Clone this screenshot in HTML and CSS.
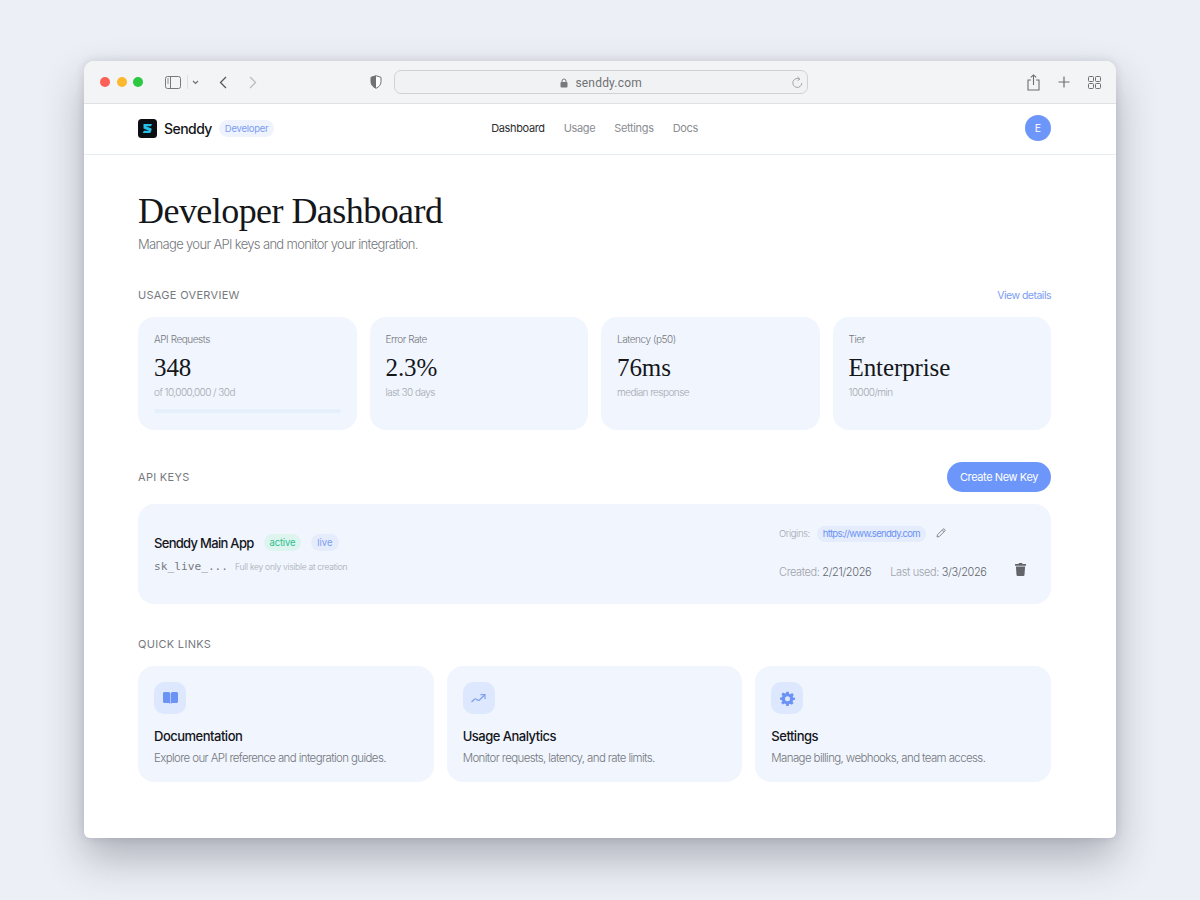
FILE: index.html
```html
<!DOCTYPE html>
<html lang="en">
  <head>
    <meta charset="UTF-8" />
    <meta name="viewport" content="width=device-width, initial-scale=1.0" />
    <title>Senddy Developer Dashboard</title>
    <link rel="stylesheet" href="styles.css">
  </head>
  <body>
    <div class="window">
      <div class="toolbar">
        <div class="traffic">
          <span class="dot red"></span>
          <span class="dot yellow"></span>
          <span class="dot green"></span>
        </div>
        <svg class="tool-sidebar" width="16" height="13" viewBox="0 0 16 13" fill="none" stroke="#77797d" stroke-width="1">
          <rect x="0.5" y="0.5" width="15" height="12" rx="2"/>
          <path d="M5.5 0.5v12"/>
          <path d="M2 3h2M2 5h2M2 7h2" stroke-width="0.8"/>
        </svg>
        <span class="tool-sep"></span>
        <svg class="tool-caret" width="7" height="5" viewBox="0 0 7 5" fill="none" stroke="#6c6e72" stroke-width="1.1">
          <path d="M1 1l2.5 2.5L6 1"/>
        </svg>
        <svg class="tool-back" width="8" height="13" viewBox="0 0 8 13" fill="none" stroke="#55575b" stroke-width="1.3">
          <path d="M7 1L1.5 6.5 7 12"/>
        </svg>
        <svg class="tool-forward" width="8" height="13" viewBox="0 0 8 13" fill="none" stroke="#b9bbbf" stroke-width="1.3">
          <path d="M1 1l5.5 5.5L1 12"/>
        </svg>
        <svg class="tool-shield" width="12" height="14" viewBox="0 0 12 14">
          <path d="M6 0.7l5 1.6v4.5c0 3-2.2 5.3-5 6.5-2.8-1.2-5-3.500-5-6.500V2.300z" fill="#fff" stroke="#6f7175" stroke-width="1"/>
          <path d="M6 0.7v12.600c-2.800-1.200-5-3.500-5-6.500V2.300z" fill="#6f7175"/>
        </svg>
        <div class="address">
          <svg class="lock" width="8" height="10" viewBox="0 0 8 10">
            <rect x="0.500" y="4" width="7" height="5.500" rx="1" fill="#77797d"/>
            <path d="M2 4.500V3a2 2 0 0 1 4 0v1.500" fill="none" stroke="#77797d" stroke-width="1"/>
          </svg>
          <span>senddy.com</span>
          <svg class="reload" width="12" height="13" viewBox="0 0 12 13" fill="none" stroke="#a4a6aa" stroke-width="1">
            <path d="M8.800 3.200a4.500 4.500 0 1 0 2 3.800"/>
            <path d="M6.500 0.800l2.400 2.300-2.400 1.600"/>
          </svg>
        </div>
        <svg class="tool-share" width="13" height="17" viewBox="0 0 13 17" fill="none" stroke="#6c6e72" stroke-width="1.100">
          <path d="M4 6H1v10h11V6H9"/>
          <path d="M6.500 11V1M3.800 3.400L6.500 0.900l2.700 2.500"/>
        </svg>
        <svg class="tool-plus" width="12" height="12" viewBox="0 0 12 12" stroke="#6c6e72" stroke-width="1.200">
          <path d="M6 0.500v11M0.500 6h11"/>
        </svg>
        <svg class="tool-tabs" width="13" height="13" viewBox="0 0 13 13" fill="none" stroke="#6c6e72" stroke-width="1">
          <rect x="0.500" y="0.500" width="5" height="5" rx="1"/>
          <rect x="7.500" y="0.500" width="5" height="5" rx="1"/>
          <rect x="0.500" y="7.500" width="5" height="5" rx="1"/>
          <rect x="7.500" y="7.500" width="5" height="5" rx="1"/>
        </svg>
      </div>

      <div class="app-header">
        <div class="brand">
          <svg class="logo" width="19" height="19" viewBox="0 0 19 19">
            <rect width="19" height="19" rx="3.500" fill="#0b0f14"/>
            <path d="M5.500 5h8.500l-1 2.200H7.800l5.700 2.300v1.500L12.300 14H4.800l1-2.200h5.400L5.500 9.500z" fill="#25c3ea"/>
          </svg>
          <span class="brand-name">Senddy</span>
          <span class="brand-tag">Developer</span>
        </div>
        <nav class="nav">
          <a class="nav-link active">Dashboard</a>
          <a class="nav-link">Usage</a>
          <a class="nav-link">Settings</a>
          <a class="nav-link">Docs</a>
        </nav>
        <div class="avatar">E</div>
      </div>

      <div class="content">
        <h1 class="page-title">Developer Dashboard</h1>
        <p class="page-sub">Manage your API keys and monitor your integration.</p>

        <div class="section-head usage-head">
          <span class="section-label">USAGE OVERVIEW</span>
          <a class="details-link">View details</a>
        </div>
        <div class="stats">
          <div class="stat">
            <div class="stat-label">API Requests</div>
            <div class="stat-value">348</div>
            <div class="stat-note">of 10,000,000 / 30d</div>
            <div class="stat-bar"></div>
          </div>
          <div class="stat">
            <div class="stat-label">Error Rate</div>
            <div class="stat-value">2.3%</div>
            <div class="stat-note">last 30 days</div>
          </div>
          <div class="stat">
            <div class="stat-label">Latency (p50)</div>
            <div class="stat-value">76ms</div>
            <div class="stat-note">median response</div>
          </div>
          <div class="stat">
            <div class="stat-label">Tier</div>
            <div class="stat-value">Enterprise</div>
            <div class="stat-note">10000/min</div>
          </div>
        </div>

        <div class="section-head keys-head">
          <span class="section-label">API KEYS</span>
          <button class="create-btn">Create New Key</button>
        </div>
        <div class="key-card">
          <div class="key-main">
            <div class="key-title-row">
              <span class="key-name">Senddy Main App</span>
              <span class="pill pill-active">active</span>
              <span class="pill pill-live">live</span>
            </div>
            <div class="key-code-row">
              <code class="key-code">sk_live_...</code>
              <span class="key-hint">Full key only visible at creation</span>
            </div>
          </div>
          <div class="key-meta">
            <div class="origins-row">
              <span class="origins-label">Origins:</span>
              <span class="origin-pill">https://www.senddy.com</span>
              <svg class="edit-icon" width="10" height="10" viewBox="0 0 10 10" fill="none" stroke="#7a7c80" stroke-width="0.900">
                <path d="M1 9l0.500-2.300L7 1.200a1 1 0 0 1 1.400 0l0.400 0.400a1 1 0 0 1 0 1.400L3.300 8.500z"/>
                <path d="M6.200 2l1.800 1.800"/>
              </svg>
            </div>
            <div class="dates-row">
              <span class="date"><span class="date-label">Created:</span> 2/21/2026</span>
              <span class="date"><span class="date-label">Last used:</span> 3/3/2026</span>
              <svg class="trash-icon" width="11" height="13" viewBox="0 0 11 13" fill="#63656a">
                <path d="M4 0h3l0.600 1H11v1.700H0V1h3.400z"/>
                <path d="M0.900 3.500h9.200l-0.600 8.300a1.200 1.200 0 0 1-1.200 1.200H2.700a1.200 1.200 0 0 1-1.200-1.200z"/>
              </svg>
            </div>
          </div>
        </div>

        <div class="section-label links-label">QUICK LINKS</div>
        <div class="links">
          <div class="link-card">
            <div class="link-icon">
              <svg width="15" height="12" viewBox="0 0 15 12" fill="#6b93f5">
                <path d="M0 1.500C0 .6.600 0 1.500 0H5.200c1.500 0 2 .8 2 2v10c-.4-.6-1-1-2-1H1.200C.5 11 0 10.500 0 9.800z"/>
                <path d="M15 1.500C15 .6 14.400 0 13.500 0H9.800C8.300 0 7.800 .8 7.800 2v10c.4-.6 1-1 2-1h4c.7 0 1.200-.5 1.200-1.200z"/>
              </svg>
            </div>
            <div class="link-title">Documentation</div>
            <div class="link-desc">Explore our API reference and integration guides.</div>
          </div>
          <div class="link-card">
            <div class="link-icon">
              <svg width="15" height="9" viewBox="0 0 15 9" fill="none" stroke="#7f9ff0" stroke-width="1.200">
                <path d="M0.500 8L3.500 5.200Q4.500 4.300 5.500 5.200L6.500 6Q7.500 6.800 8.500 6L13.500 1"/>
                <path d="M9.500 0.700h4.500v4.300"/>
              </svg>
            </div>
            <div class="link-title">Usage Analytics</div>
            <div class="link-desc">Monitor requests, latency, and rate limits.</div>
          </div>
          <div class="link-card">
            <div class="link-icon">
              <svg width="15" height="15" viewBox="0 0 24 24" fill="#6b93f5">
                <path fill-rule="evenodd" d="M10 1h4l.6 3.200c.7.200 1.400.500 2 .9l2.700-1.800 2.800 2.800-1.800 2.700c.4.600.7 1.300.9 2L24 10.500v3.500l-3.200.6c-.2.700-.5 1.400-.9 2l1.800 2.700-2.800 2.800-2.700-1.800c-.6.400-1.300.7-2 .9L14 24h-4l-.6-3.200c-.7-.2-1.400-.5-2-.9l-2.700 1.800-2.800-2.800 1.800-2.700c-.4-.6-.7-1.300-.9-2L0 14v-3.500l3.200-.6c.2-.7.5-1.400.9-2L2.300 5.100l2.800-2.800 2.700 1.800c.6-.4 1.300-.7 2-.9zM12 8.500a4 4 0 1 0 0 8 4 4 0 0 0 0-8z"/>
              </svg>
            </div>
            <div class="link-title">Settings</div>
            <div class="link-desc">Manage billing, webhooks, and team access.</div>
          </div>
        </div>
      </div>
    </div>
  </body>
</html>
```

FILE: styles.css
```css
* {
  box-sizing: border-box;
}
body {
  margin: 0;
  height: 900px;
  overflow: hidden;
  padding: 61px 84px 0;
  background-color: #edeff6;
  font-family: Inter, "Liberation Sans", sans-serif;
}
.window {
  height: 777px;
  background-color: #fff;
  border-radius: 10px 10px 6px 6px;
  overflow: hidden;
  box-shadow: 0 20px 42px rgba(40, 42, 60, 0.32), 0 0 10px rgba(40, 42, 60, 0.14);
}
.toolbar {
  height: 43px;
  display: flex;
  align-items: center;
  background-color: #f3f4f6;
  border-bottom: 1px solid #e0e1e4;
  padding-left: 16px;
}
.traffic {
  display: flex;
  gap: 6.600px;
}
.dot {
  width: 10px;
  height: 10px;
  border-radius: 50%;
}
.red {
  background-color: #fb5f57;
}
.yellow {
  background-color: #fcb82e;
}
.green {
  background-color: #2cc840;
}
.tool-sidebar {
  margin-left: 22px;
}
.tool-sep {
  width: 1px;
  height: 14px;
  margin-left: 6px;
  background-color: #dfe0e3;
}
.tool-caret {
  margin-left: 4px;
}
.tool-back {
  margin-left: 20px;
}
.tool-forward {
  margin-left: 22px;
}
.tool-shield {
  margin-left: 113px;
}
.address {
  width: 414px;
  height: 24px;
  margin-left: 12px;
  padding-top: 2px;
  border: 1px solid #cfd1d4;
  border-radius: 7px;
  background-color: #f1f2f4;
  display: flex;
  align-items: center;
  justify-content: center;
  gap: 7px;
  position: relative;
  font-family: Roboto, "Liberation Sans", sans-serif;
  font-size: 12px;
  letter-spacing: 0.2px;
  color: #6f7175;
}
.reload {
  position: absolute;
  right: 4px;
  top: 5px;
}
.tool-share {
  margin-left: 219px;
}
.tool-plus {
  margin-left: 18px;
}
.tool-tabs {
  margin-left: 18px;
}
.app-header {
  height: 51px;
  display: grid;
  grid-template-columns: 1fr auto 1fr;
  align-items: center;
  padding: 0 65px 2px 54px;
  border-bottom: 1px solid #e6eef3;
}
.brand {
  display: flex;
  align-items: center;
}
.brand-name {
  margin-left: 7px;
  font-size: 14px;
  font-weight: 500;
  letter-spacing: -0.55px;
  color: #14161a;
}
.brand-tag {
  margin-left: 7px;
  padding: 0 6px;
  height: 17px;
  line-height: 17px;
  border-radius: 9px;
  background-color: #eef3fe;
  font-size: 9.500px;
  letter-spacing: -0.25px;
  color: #7c9df3;
}
.nav {
  display: flex;
  gap: 19px;
  font-size: 11px;
  letter-spacing: -0.35px;
  color: #8b8d92;
}
.nav-link.active {
  color: #2b2d31;
}
.avatar {
  width: 26px;
  height: 26px;
  justify-self: end;
  border-radius: 50%;
  background-color: #6d96fa;
  color: #fff;
  font-size: 10.500px;
  display: flex;
  align-items: center;
  justify-content: center;
}
.content {
  padding: 35px 65px 0 54px;
}
.page-title {
  margin: 0;
  font-family: "Liberation Serif", serif;
  font-weight: 400;
  font-size: 36px;
  line-height: 42px;
  letter-spacing: -0.55px;
  color: #14161a;
}
.page-sub {
  margin: 3px 0 0;
  font-size: 13px;
  font-weight: 300;
  line-height: 18px;
  letter-spacing: -0.66px;
  color: #75777c;
}
.section-head {
  display: flex;
  align-items: center;
  justify-content: space-between;
}
.usage-head {
  margin-top: 33px;
  height: 18px;
}
.section-label {
  font-size: 11px;
  line-height: 18px;
  letter-spacing: 0.3px;
  color: #77797e;
}
.details-link {
  font-size: 10.500px;
  letter-spacing: -0.5px;
  color: #7c9df3;
}
.stats {
  display: flex;
  gap: 13px;
  margin-top: 13px;
}
.stat {
  flex: 1;
  height: 113px;
  padding: 15px 16px 0;
  border-radius: 16px;
  background-color: #f0f5fe;
}
.stat-label {
  font-size: 10px;
  font-weight: 300;
  line-height: 14px;
  letter-spacing: -0.45px;
  color: #75777c;
}
.stat-value {
  margin-top: 7px;
  font-family: "Liberation Serif", serif;
  font-size: 25px;
  line-height: 30px;
  letter-spacing: -0.1px;
  color: #14161a;
}
.stat-note {
  margin-top: 2px;
  font-size: 10px;
  font-weight: 300;
  line-height: 14px;
  letter-spacing: -0.55px;
  color: #a5a8ae;
}
.stat-bar {
  height: 4px;
  margin-top: 10px;
  border-radius: 2px;
  background-color: #e4f0fb;
}
.keys-head {
  margin-top: 32px;
  height: 30px;
}
.create-btn {
  height: 30px;
  width: 104px;
  padding: 0;
  border: none;
  border-radius: 15px;
  background-color: #6d96fa;
  color: #fff;
  font-family: inherit;
  font-size: 11px;
  letter-spacing: -0.4px;
}
.key-card {
  display: flex;
  justify-content: space-between;
  margin-top: 12px;
  height: 100px;
  padding: 0 24px 0 16px;
  border-radius: 16px;
  background-color: #f0f5fe;
}
.key-main {
  padding-top: 30px;
}
.key-title-row {
  display: flex;
  align-items: center;
}
.key-name {
  font-size: 13px;
  font-weight: 500;
  letter-spacing: -0.7px;
  color: #14161a;
}
.pill {
  height: 17px;
  line-height: 17px;
  padding: 0 6px;
  border-radius: 9px;
  font-size: 9.500px;
}
.pill-active {
  margin-left: 10px;
  background-color: #ddf5ee;
  letter-spacing: -0.2px;
  color: #2cbf8f;
}
.pill-live {
  margin-left: 10px;
  background-color: #e5ecfc;
  color: #7c9df3;
}
.key-code-row {
  display: flex;
  align-items: center;
  margin-top: 9px;
}
.key-code {
  font-family: "DejaVu Sans Mono", monospace;
  font-size: 11.200px;
  color: #787a7f;
}
.key-hint {
  margin-left: 7px;
  font-size: 8.500px;
  font-weight: 300;
  letter-spacing: -0.25px;
  color: #a5a8ae;
}
.key-meta {
  width: 248px;
  padding-top: 21px;
}
.origins-row {
  display: flex;
  align-items: center;
  height: 17px;
}
.origins-label {
  font-size: 9.500px;
  font-weight: 300;
  letter-spacing: -0.4px;
  color: #a5a8ae;
}
.origin-pill {
  margin-left: 7px;
  height: 16px;
  line-height: 16px;
  padding: 0 6px;
  border-radius: 8px;
  background-color: #e5ecfc;
  font-size: 9.500px;
  letter-spacing: -0.7px;
  color: #6b93f5;
}
.edit-icon {
  margin-left: 10px;
  margin-top: -2px;
}
.dates-row {
  display: flex;
  align-items: center;
  margin-top: 22px;
  height: 16px;
  font-size: 11px;
  font-weight: 300;
  letter-spacing: -0.38px;
  color: #63656a;
  white-space: nowrap;
}
.date-label {
  color: #a0a3a9;
}
.date + .date {
  margin-left: 19px;
}
.trash-icon {
  margin-left: 28px;
  margin-top: -6px;
}
.links-label {
  margin-top: 31px;
}
.links {
  display: flex;
  gap: 13px;
  margin-top: 13px;
}
.link-card {
  flex: 1;
  height: 116px;
  padding: 16px;
  border-radius: 16px;
  background-color: #f0f5fe;
}
.link-icon {
  width: 32px;
  height: 32px;
  border-radius: 10px;
  background-color: #dde7fd;
  display: flex;
  align-items: center;
  justify-content: center;
}
.link-title {
  margin-top: 13px;
  font-size: 13px;
  font-weight: 450;
  line-height: 18px;
  letter-spacing: -0.5px;
  color: #14161a;
}
.link-desc {
  margin-top: 5px;
  font-size: 11.500px;
  font-weight: 300;
  line-height: 16px;
  letter-spacing: -0.62px;
  color: #75777c;
}
```
